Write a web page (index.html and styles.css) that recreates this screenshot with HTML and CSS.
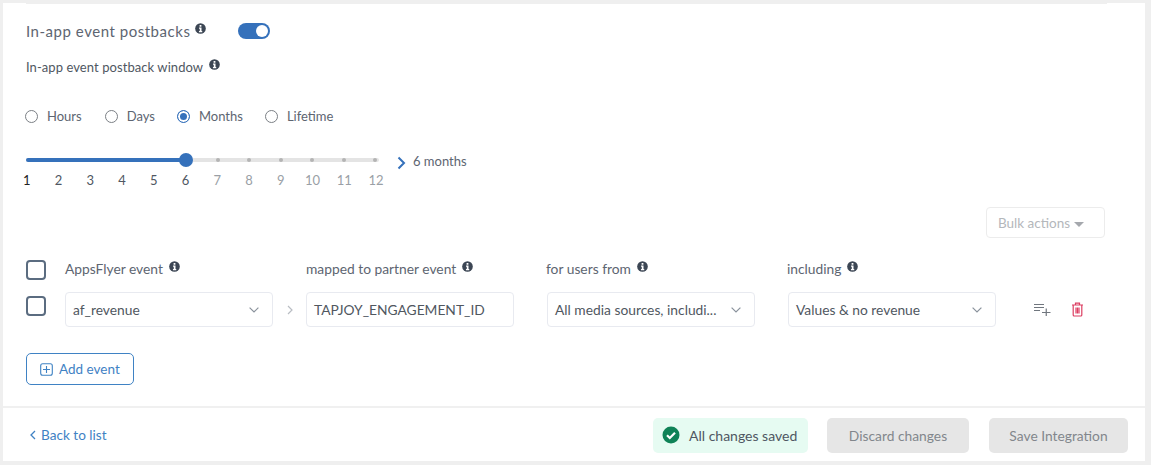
FILE: index.html
```html
<!DOCTYPE html>
<html lang="en">
<head>
<meta charset="utf-8">
<title>In-app event postbacks</title>
<link rel="stylesheet" href="styles.css">
</head>
<body>
<svg class="defs" width="0" height="0" aria-hidden="true">
  <symbol id="info" viewBox="0 0 12 12"><circle cx="6" cy="6" r="5.8" fill="#3c4654"/><rect x="4.9" y="2.100" width="2.200" height="1.900" rx=".5" fill="#fff"/><path d="M4.400 5h2.700v3.700h.8V10H4.300V8.700h.9V6.200h-.8z" fill="#fff"/></symbol>
  <symbol id="chev" viewBox="0 0 10 6"><path d="M.6.6L5 5 9.400.6" fill="none" stroke="#8a929c" stroke-width="1.200"/></symbol>
</svg>
<main class="card">
  <div class="strip"></div>
  <section class="content">
    <div class="title-row">
      <span class="title">In-app event postbacks</span>
      <svg class="info info-title"><use href="#info"/></svg>
      <span class="toggle"><span class="knob"></span></span>
    </div>
    <div class="sub-row">
      <span class="sub">In-app event postback window</span>
      <svg class="info"><use href="#info"/></svg>
    </div>
    <div class="radios">
      <label class="radio r-hours"><span class="dot"></span>Hours</label>
      <label class="radio r-days"><span class="dot"></span>Days</label>
      <label class="radio r-months"><span class="dot on"></span>Months</label>
      <label class="radio"><span class="dot"></span>Lifetime</label>
    </div>
    <div class="slider-row">
      <div class="slider">
        <div class="rail">
          <div class="fill"></div>
          <span class="handle"></span>
          <div class="ticks"><i></i><i></i><i></i><i></i><i></i><i></i></div>
        </div>
        <div class="nums">
          <span class="n-first">1</span><span>2</span><span>3</span><span>4</span><span>5</span><span>6</span>
          <span class="dim">7</span><span class="dim">8</span><span class="dim">9</span><span class="dim">10</span><span class="dim">11</span><span class="dim">12</span>
        </div>
      </div>
      <svg class="big-chev" viewBox="0 0 9 14"><path d="M1.500 1.500L7 7l-5.500 5.500" fill="none" stroke="#3571bb" stroke-width="2"/></svg>
      <span class="months">6 months</span>
    </div>
    <div class="bulk-row"><button class="bulk">Bulk actions<span class="caret"></span></button></div>
    <div class="heads">
      <span class="check"></span>
      <span class="head head-event">AppsFlyer event<svg class="info"><use href="#info"/></svg></span>
      <span class="head head-mapped">mapped to partner event<svg class="info"><use href="#info"/></svg></span>
      <span class="head head-users">for users from<svg class="info"><use href="#info"/></svg></span>
      <span class="head">including<svg class="info"><use href="#info"/></svg></span>
    </div>
    <div class="fields">
      <span class="check check-row"></span>
      <div class="select"><span>af_revenue</span><svg class="chev"><use href="#chev"/></svg></div>
      <svg class="arrow" viewBox="0 0 6 10"><path d="M1 1l4 4-4 4" fill="none" stroke="#b9bdc3" stroke-width="1.200"/></svg>
      <div class="select"><span>TAPJOY_ENGAGEMENT_ID</span></div>
      <div class="select"><span>All media sources, includi...</span><svg class="chev"><use href="#chev"/></svg></div>
      <div class="select"><span>Values &amp; no revenue</span><svg class="chev"><use href="#chev"/></svg></div>
      <div class="row-actions">
        <svg class="ico-add" viewBox="0 0 17 13"><path d="M0 1.500h10M0 4.500h10M0 7.500h6M8 9.500h8.500M12.250 5.500v7.500" fill="none" stroke="#70767e" stroke-width="1.200"/></svg>
        <svg class="ico-del" viewBox="0 0 13 15"><path d="M1 3h11M4.500 3V1.200h4V3M2.200 3v10a1 1 0 0 0 1 1h6.600a1 1 0 0 0 1-1V3M5 5.500v6M6.500 5.500v6M8 5.500v6" fill="none" stroke="#dc3f62" stroke-width="1.200"/></svg>
      </div>
    </div>
    <button class="add"><svg viewBox="0 0 13 13"><rect x=".7" y=".7" width="11.600" height="11.600" rx="2" fill="none" stroke="#3f82c4" stroke-width="1.100"/><path d="M6.500 3v7M3 6.500h7" stroke="#3f82c4" stroke-width="1.100"/></svg>Add event</button>
  </section>
  <footer class="footer">
    <a class="back"><svg viewBox="0 0 6 10"><path d="M5 1L1 5l4 4" fill="none" stroke="#3f82c4" stroke-width="1.300"/></svg>Back to list</a>
    <div class="saved"><svg viewBox="0 0 18 18"><circle cx="9" cy="9" r="8.500" fill="#0f8257"/><path d="M5 9.300l2.800 2.700L13 6.700" fill="none" stroke="#fff" stroke-width="2.200"/></svg>All changes saved</div>
    <button class="btn btn-discard">Discard changes</button>
    <button class="btn btn-save">Save Integration</button>
  </footer>
</main>
</body>
</html>
```
FILE: styles.css
```css
* { box-sizing: border-box; }
html, body { margin: 0; height: 465px; overflow: hidden; }
body { background: #efefef; padding: 3px 6px 4px 3px; font-family: "Lato", "Liberation Sans", sans-serif; color: #4f5762; }
.defs { position: absolute; }
button { font-family: inherit; }
.card { background: #fff; height: 458px; display: flex; flex-direction: column; }
.strip { height: 1px; margin-left: 23px; margin-right: 38px; background: #efefef; }
.content { flex: 1; padding: 0 23px; min-height: 0; }
.info { width: 11px; height: 11px; flex: none; }
.title-row { display: flex; align-items: center; height: 22px; margin-top: 16px; }
.title { font-size: 15px; color: #5d6571; letter-spacing: .53px; }
.info-title { margin: -6px 0 0 5px; }
.toggle { margin-left: 32px; width: 32px; height: 16px; border-radius: 8px; background: #3571bb; display: flex; justify-content: flex-end; align-items: center; padding-right: 2px; }
.knob { width: 12px; height: 12px; border-radius: 50%; background: #fff; }
.sub-row { display: flex; align-items: center; height: 20px; margin-top: 15px; }
.sub { font-size: 13px; color: #4f5762; letter-spacing: .07px; }
.sub-row .info { margin: -5px 0 0 6px; }
.radios { display: flex; align-items: center; height: 20px; margin: 29px 0 0 -1px; font-size: 13px; color: #5d6571; }
.radio { display: flex; align-items: center; }
.dot { width: 13px; height: 13px; border: 1px solid #7b7f85; border-radius: 50%; margin-right: 9px; background: #fff; }
.dot.on { border-color: #3571bb; background: #3571bb; box-shadow: inset 0 0 0 2px #fff; }
.r-hours { margin-right: 23px; }
.r-days { margin-right: 22px; }
.r-months { margin-right: 22px; }
.slider-row { display: flex; align-items: flex-start; height: 40px; margin-top: 23px; }
.slider { width: 358px; }
.rail { position: relative; height: 4px; margin-top: 9px; width: 353px; background: #e4e4e4; border-radius: 2px; }
.fill { width: 160px; height: 4px; background: #3571bb; border-radius: 2px; }
.handle { position: absolute; left: 153px; top: -5px; width: 14px; height: 14px; border-radius: 50%; background: #3571bb; }
.ticks { position: absolute; left: 190px; top: 0; width: 161px; height: 4px; display: flex; justify-content: space-between; }
.ticks i { width: 4px; height: 4px; border-radius: 50%; background: #b4b4b4; }
.nums { display: grid; grid-template-columns: repeat(12, 31.750px); margin: 9px 0 0 -15px; font-size: 13px; text-align: center; color: #4f5762; line-height: 18px; }
.n-first { color: #222; }
.nums .dim { color: #9a9fa6; }
.big-chev { width: 9px; height: 14px; margin: 7px 0 0 13px; flex: none; }
.months { font-size: 13px; margin: 4px 0 0 7px; color: #5d6571; }
.bulk-row { display: flex; justify-content: flex-end; margin-top: 18px; padding-right: 17px; }
.bulk { width: 119px; height: 31px; background: #fff; border: 1px solid #ececec; border-radius: 4px; font-size: 13.500px; color: #b4b7bb; display: flex; align-items: center; padding: 0 0 0 11px; }
.caret { margin: 3px 0 0 4px; border: 5px solid transparent; border-top-color: #a5a8ad; border-bottom-width: 0; }
.heads { display: flex; align-items: flex-start; margin-top: 19px; height: 30px; }
.head { display: flex; align-items: center; font-size: 13.800px; color: #5d6571; height: 20px; margin-top: 1px; }
.head .info { margin: -4px 0 0 6px; }
.heads .check { margin-right: 19px; margin-top: 3px; }
.head-event { width: 241px; }
.head-mapped { width: 240px; }
.head-users { width: 241px; }
.check { width: 20px; height: 20px; border: 2px solid #5b6c80; border-radius: 4px; display: block; flex: none; }
.fields { display: flex; align-items: flex-start; height: 35px; margin-top: 5px; }
.check-row { margin: 4px 19px 0 0; }
.select { width: 208px; height: 35px; border: 1px solid #e8eaf0; border-radius: 4px; font-size: 13.800px; color: #50575f; display: flex; align-items: center; justify-content: space-between; padding: 0 13px 0 7px; flex: none; white-space: nowrap; }
.arrow { width: 6px; height: 10px; flex: none; margin: 13px 13px 0 14px; }
.select + .select { margin-left: 33px; }
.chev { width: 10px; height: 6px; flex: none; }
.row-actions { display: flex; align-items: center; margin-left: 38px; height: 34px; }
.ico-add { width: 17px; height: 13px; }
.ico-del { width: 13px; height: 15px; margin-left: 20px; }
.add { display: flex; align-items: center; margin-top: 26px; width: 108px; height: 32px; background: #fff; border: 1px solid #3f82c4; border-radius: 5px; color: #3f82c4; font-size: 13.500px; padding: 0 0 0 13px; }
.add svg { width: 13px; height: 13px; margin-right: 6px; }
.footer { height: 55px; flex: none; border-top: 2px solid #f0f0f0; display: flex; align-items: center; padding: 1px 17px 0 27px; }
.back { display: flex; align-items: center; color: #3f82c4; font-size: 13.600px; margin-right: auto; }
.back svg { width: 6px; height: 10px; margin-right: 5px; }
.saved { display: flex; align-items: center; width: 155px; height: 35px; background: #e6fbf2; border-radius: 5px; font-size: 14px; color: #4f5762; padding-left: 9px; }
.saved svg { width: 18px; height: 18px; margin-right: 9px; }
.btn { height: 35px; width: 142px; background: #e6e6e6; border: 0; border-radius: 5px; color: #82868c; font-size: 13.800px; }
.btn-discard { margin: 0 20px 0 19px; }
.btn-save { width: 139px; }
```
